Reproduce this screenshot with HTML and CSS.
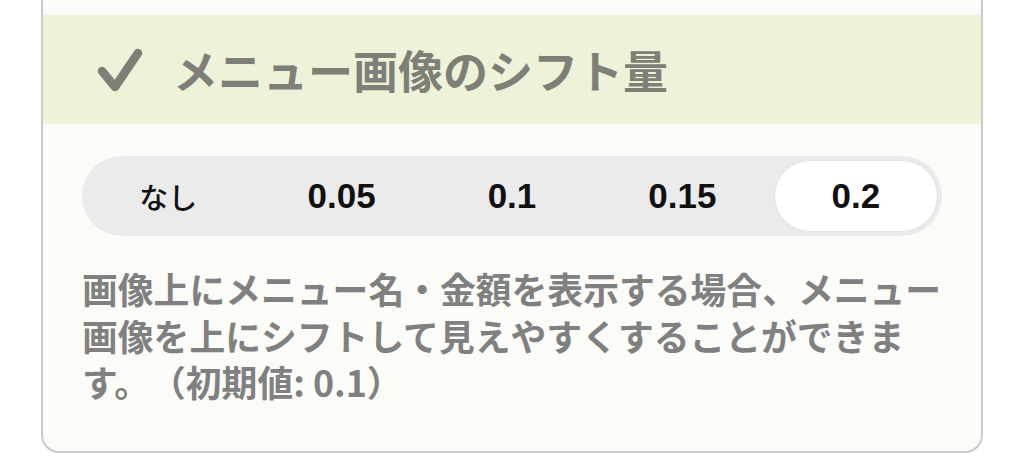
FILE: index.html
```html
<!DOCTYPE html>
<html lang="ja">
<head>
    <meta charset="UTF-8">
    <meta name="viewport" content="width=device-width, initial-scale=1.0">
    <title>メニュー画像のシフト量</title>
    <link rel="stylesheet" href="styles.css">
</head>
<body>
    <div class="card">
        <!-- 見出し -->
        <div class="card-head">
            <svg class="check" width="48" height="46" viewBox="0 0 48 46">
                <path d="M6 25 L19 41 L42 7" fill="none" stroke="#7e7f77" stroke-width="8.5" stroke-linecap="round" stroke-linejoin="round"/>
            </svg>
            <h2 class="title">メニュー画像のシフト量</h2>
        </div>

        <div class="card-body">
            <!-- シフト量の選択 -->
            <div class="segments">
                <button class="seg seg-ja">なし</button>
                <button class="seg">0.05</button>
                <button class="seg">0.1</button>
                <button class="seg">0.15</button>
                <button class="seg active">0.2</button>
            </div>

            <p class="note">画像上にメニュー名・金額を表示する場合、メニュー画像を上にシフトして見えやすくすることができます。（初期値: 0.1）</p>
        </div>
    </div>
</body>
</html>
```

FILE: styles.css
```css
body {
    margin: 0;
    background-color: #fff;
    font-family: "Noto Sans CJK JP", sans-serif;
}

.card {
    margin: 0 41px;
    padding-top: 15px;
    background-color: #fbfcf7;
    border: 2px solid #cacaca;
    border-top: none;
    border-radius: 0 0 18px 18px;
}

.card-head {
    height: 109px;
    display: flex;
    align-items: center;
    padding-left: 53px;
    background-color: #eef2d8;
}

.check {
    margin-right: 29px;
    margin-top: -2px;
}

.title {
    margin: 0;
    font-size: 45px;
    font-weight: 700;
    color: #7e7f77;
    line-height: 1;
}

.card-body {
    padding: 32px 39px 46px;
}

.segments {
    display: grid;
    grid-template-columns: repeat(5, 1fr);
    height: 80px;
    padding: 4px;
    box-sizing: border-box;
    background-color: #ebebeb;
    border-radius: 40px;
}

.seg {
    border: none;
    background: none;
    border-radius: 36px;
    font-family: "Liberation Sans", "Noto Sans CJK JP", sans-serif;
    font-size: 35px;
    font-weight: 700;
    color: #111;
    padding: 0;
}

.seg-ja {
    font-size: 29px;
    font-weight: 500;
    padding-left: 0;
    margin-right: 6px;
}

.seg.active {
    background-color: #fff;
    border: 1px solid #e2e2e2;
    margin-left: 6px;
}

.note {
    margin: 29px 0 0;
    font-size: 35.8px;
    font-weight: 700;
    line-height: 46.5px;
    color: #808080;
    text-spacing-trim: space-all;
}
```
